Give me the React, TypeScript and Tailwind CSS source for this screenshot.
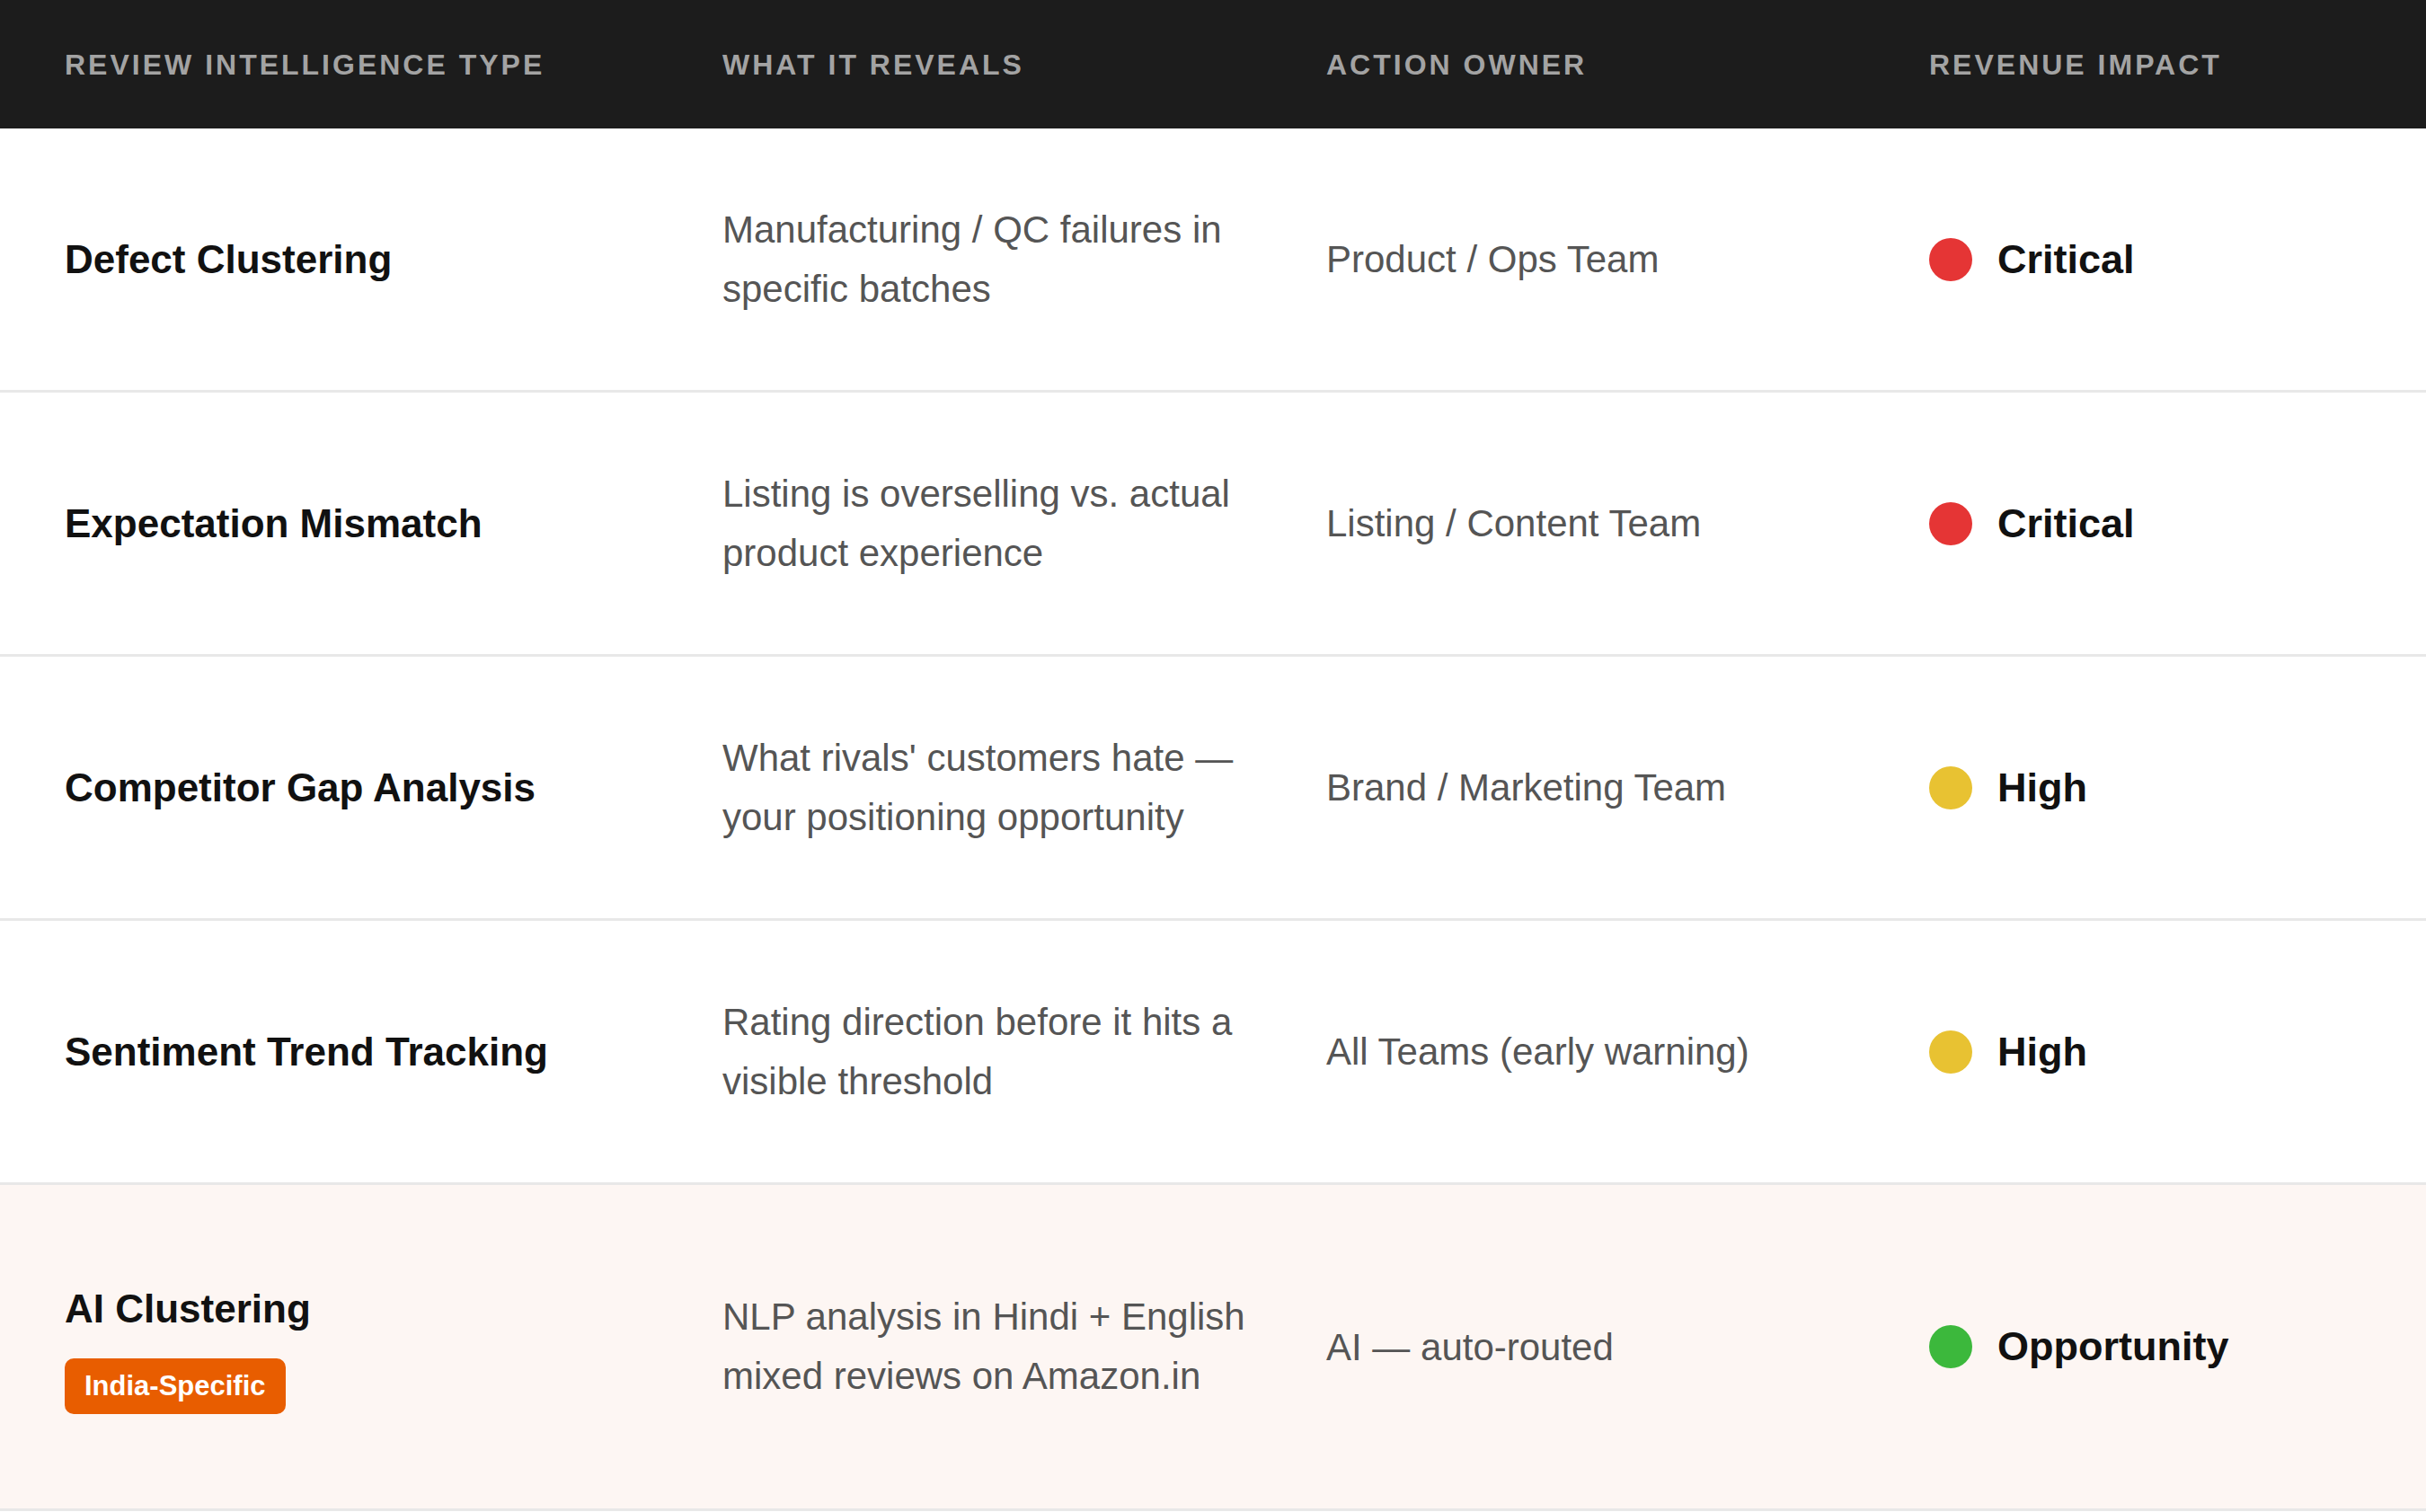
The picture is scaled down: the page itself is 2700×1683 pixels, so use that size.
const rows = [
  { type: "Defect Clustering", reveals: "Manufacturing / QC failures in specific batches", owner: "Product / Ops Team", impact: "Critical", dot: "bg-[#e53535]" },
  { type: "Expectation Mismatch", reveals: "Listing is overselling vs. actual product experience", owner: "Listing / Content Team", impact: "Critical", dot: "bg-[#e53535]" },
  { type: "Competitor Gap Analysis", reveals: "What rivals' customers hate — your positioning opportunity", owner: "Brand / Marketing Team", impact: "High", dot: "bg-[#e8c232]" },
  { type: "Sentiment Trend Tracking", reveals: "Rating direction before it hits a visible threshold", owner: "All Teams (early warning)", impact: "High", dot: "bg-[#e8c232]" },
  { type: "AI Clustering", reveals: "NLP analysis in Hindi + English mixed reviews on Amazon.in", owner: "AI — auto-routed", impact: "Opportunity", dot: "bg-[#3cb83c]", badge: "India-Specific" },
]

const grid = "grid grid-cols-[732px_672px_671px_1fr] px-[72px] items-center"

export default function App() {
  return (
    <div className="w-[2700px] min-h-[1683px] bg-white" style={{ fontFamily: '"Liberation Sans", Arial, sans-serif' }}>
      <div className={`${grid} h-[143px] bg-[#1c1c1c] text-[#a3a3a3] text-[32px] font-bold tracking-[3px]`}>
        <div>REVIEW INTELLIGENCE TYPE</div>
        <div>WHAT IT REVEALS</div>
        <div>ACTION OWNER</div>
        <div>REVENUE IMPACT</div>
      </div>
      {rows.map((r) => (
        <div
          key={r.type}
          className={`${grid} border-b-[3px] border-[#e8e8e8] ${r.badge ? "h-[363px] bg-[#fdf6f3]" : "h-[294px]"}`}
        >
          <div>
            <div className="text-[44px] font-bold text-[#111]">{r.type}</div>
            {r.badge && (
              <span className="inline-block mt-[22px] bg-[#e85d00] text-white text-[31px] font-bold px-[22px] h-[62px] leading-[62px] rounded-[10px]">
                {r.badge}
              </span>
            )}
          </div>
          <div className="pr-[60px] text-[42px] leading-[66px] text-[#555]">{r.reveals}</div>
          <div className="text-[42px] text-[#555]">{r.owner}</div>
          <div className="flex items-center gap-[28px]">
            <span className={`w-[48px] h-[48px] rounded-full ${r.dot}`} />
            <span className="text-[45px] font-bold text-[#111]">{r.impact}</span>
          </div>
        </div>
      ))}
    </div>
  )
}
